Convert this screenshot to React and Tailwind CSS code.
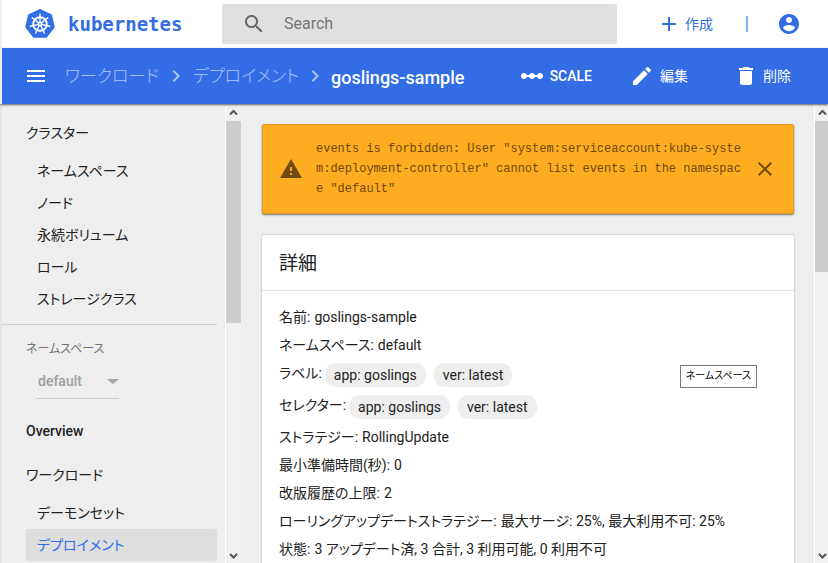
import React from "react";

const JP = "font-[Roboto,'Noto_Sans_CJK_JP',sans-serif] [font-feature-settings:'palt']";

const clusterItems = ["ネームスペース", "ノード", "永続ボリューム", "ロール", "ストレージクラス"];

function KubeLogo() {
  const spokes = [0, 1, 2, 3, 4, 5, 6].map((i) => (i * 360) / 7);
  return (
    <svg viewBox="0 0 32 32" className="size-8 shrink-0" aria-hidden="true">
      <path
        d="M16 2.5 L26.6 7.5 L29.2 18.9 L21.8 28.2 L10.2 28.2 L2.8 18.9 L5.4 7.5 Z"
        fill="#326de6"
        stroke="#326de6"
        strokeWidth="3"
        strokeLinejoin="round"
      />
      <g stroke="#fff" fill="none">
        <circle cx="16" cy="16" r="6.8" strokeWidth="1.9" />
        {spokes.map((a) => (
          <path key={a} d="M16 14.5V6" strokeWidth="1.4" strokeLinecap="round" transform={`rotate(${a} 16 16)`} />
        ))}
      </g>
      <circle cx="16" cy="16" r="2.4" fill="#fff" />
      <circle cx="16" cy="16" r="0.8" fill="#326de6" />
    </svg>
  );
}

function Icon({ d, className }) {
  return (
    <svg viewBox="0 0 24 24" fill="currentColor" className={`shrink-0 ${className}`} aria-hidden="true">
      <path d={d} />
    </svg>
  );
}

const icons = {
  search:
    "M15.5 14h-.79l-.28-.27C15.41 12.59 16 11.11 16 9.5 16 5.91 13.09 3 9.5 3S3 5.91 3 9.5 5.91 16 9.5 16c1.61 0 3.09-.59 4.23-1.57l.27.28v.79l5 4.99L20.49 19l-4.99-5zm-6 0C7.01 14 5 11.99 5 9.5S7.01 5 9.5 5 14 7.01 14 9.5 11.99 14 9.5 14z",
  add: "M19 13h-6v6h-2v-6H5v-2h6V5h2v6h6v2z",
  account:
    "M12 2C6.48 2 2 6.48 2 12s4.48 10 10 10 10-4.48 10-10S17.52 2 12 2zm0 3c1.66 0 3 1.34 3 3s-1.34 3-3 3-3-1.34-3-3 1.34-3 3-3zm0 14.2c-2.5 0-4.71-1.28-6-3.22.03-1.99 4-3.08 6-3.08 1.99 0 5.97 1.09 6 3.08-1.29 1.94-3.5 3.22-6 3.22z",
  menu: "M3 18h18v-2H3v2zm0-5h18v-2H3v2zm0-7v2h18V6H3z",
  chevron: "M10 6L8.59 7.41 13.17 12l-4.58 4.59L10 18l6-6z",
  scale:
    "M23 12c0 1.66-1.34 3-3 3-1.3 0-2.4-.84-2.82-2h-2.36c-.42 1.16-1.52 2-2.82 2s-2.4-.84-2.82-2H6.82C6.4 14.16 5.3 15 4 15c-1.66 0-3-1.34-3-3s1.34-3 3-3c1.3 0 2.4.84 2.82 2h2.36C9.6 9.84 10.7 9 12 9s2.4.84 2.82 2h2.36C17.6 9.84 18.7 9 20 9c1.66 0 3 1.34 3 3z",
  edit: "M3 17.25V21h3.75L17.81 9.94l-3.75-3.75L3 17.25zM20.71 7.04c.39-.39.39-1.02 0-1.41l-2.34-2.34c-.39-.39-1.02-.39-1.41 0l-1.83 1.83 3.75 3.75 1.83-1.83z",
  trash: "M6 19c0 1.1.9 2 2 2h8c1.1 0 2-.9 2-2V7H6v12zM19 4h-3.5l-1-1h-5l-1 1H5v2h14V4z",
  warning: "M1 21h22L12 2 1 21zm12-3h-2v-2h2v2zm0-4h-2v-4h2v4z",
  close:
    "M19 6.41L17.59 5 12 10.59 6.41 5 5 6.41 10.59 12 5 17.59 6.41 19 12 13.41 17.59 19 19 17.59 13.41 12z",
};

function Scrollbar({ size, thumb }) {
  return (
    <div className={`flex shrink-0 flex-col overflow-hidden border-l border-white bg-[#f0f0f0] ${size}`} aria-hidden="true">
      <svg viewBox="0 0 15 17" className="h-[17px] w-[15px] shrink-0">
        <path d="M4 10.5L7.5 7l3.500 3.500" fill="none" stroke="#555" strokeWidth="2" />
      </svg>
      <div className={`w-full shrink-0 bg-[#cdcdcd] ${thumb}`} />
      <div className="flex-1" />
      <svg viewBox="0 0 15 16" className="h-4 w-[15px] shrink-0">
        <path d="M4 7L7.500 10.500 11 7" fill="none" stroke="#555" strokeWidth="2" />
      </svg>
    </div>
  );
}

function Chip({ children }) {
  return <span className="mr-2 h-6 rounded-[10px] bg-[#eee] px-[9px] leading-6">{children}</span>;
}

function Row({ label, children }) {
  return (
    <div className="flex h-7 items-center gap-1 whitespace-nowrap">
      <dt>{label}:</dt>
      <dd>{children}</dd>
    </div>
  );
}

function ChipRow({ label, children }) {
  return (
    <div className="flex h-8 gap-[3px] whitespace-nowrap">
      <dt className="leading-7">{label}:</dt>
      <dd className="flex items-center">{children}</dd>
    </div>
  );
}

function Sidebar() {
  const item = "flex h-8 items-center rounded-xs pl-[11px]";
  return (
    <nav className="min-w-0 flex-1 overflow-hidden border-l-2 border-[#e4e4e4] pt-[13px]">
      <a href="#cluster" className="ml-6 flex h-8 items-center">クラスター</a>
      <ul className="mt-[6px] mr-2 ml-6">
        {clusterItems.map((name) => (
          <li key={name}>
            <a href="#item" className={item}>{name}</a>
          </li>
        ))}
      </ul>
      <div className="mt-[9px] mr-2 border-t border-[#cfcfcf] pt-[14px]">
        <label htmlFor="namespace" className="ml-6 block text-xs leading-5 text-[#757575]">ネームスペース</label>
        <div className="mt-2 ml-[34px] flex h-8 w-[83px] items-center border-b border-[#cfcfcf] pb-[3px]">
          <select id="namespace" className="min-w-0 flex-1 appearance-none bg-transparent pl-[2px] font-medium text-[#9e9e9e]">
            <option>default</option>
          </select>
          <span className="size-0 border-x-[6px] border-t-[5px] border-x-transparent border-t-[#a6a6a6]" />
        </div>
      </div>
      <a href="#overview" className="mt-4 ml-6 flex h-8 items-center font-medium">Overview</a>
      <a href="#workloads" className="mt-3 ml-6 flex h-8 items-center">ワークロード</a>
      <ul className="mt-[6px] mr-2 ml-6">
        <li><a href="#daemonsets" className={item}>デーモンセット</a></li>
        <li><a href="#deployments" className={`${item} bg-[#dedede] text-[#326de6]`}>デプロイメント</a></li>
      </ul>
    </nav>
  );
}

export default function App() {
  return (
    <div className={`${JP} flex h-screen flex-col overflow-hidden bg-[#eee] text-sm text-[#212121]`}>
      <header className="flex h-12 shrink-0 items-center border-l-2 border-[#eee] bg-white text-[#326de6]">
        <a href="#home" className="flex w-[220px] shrink-0 items-center gap-3 pl-[22px]">
          <KubeLogo />
          <span className="font-['DejaVu_Sans_Mono',monospace] text-[19px] leading-6 font-bold">kubernetes</span>
        </a>
        <label className="flex h-10 min-w-0 flex-1 items-center gap-[18px] rounded-xs bg-[#e0e0e0] pl-5 text-[#666]">
          <Icon d={icons.search} className="size-6" />
          <input type="text" placeholder="Search" aria-label="Search" className="min-w-0 flex-1 bg-transparent text-base outline-none placeholder:text-[#757575]" />
        </label>
        <button className="ml-10 flex items-center gap-1"><Icon d={icons.add} className="size-6" />作成</button>
        <span className="ml-[33px] h-4 w-[2px] bg-[#84b0f2]" />
        <button aria-label="Account" className="mr-[27px] ml-[29px]"><Icon d={icons.account} className="size-6" /></button>
      </header>

      <div className="relative flex h-14 shrink-0 items-center border-l-2 border-[#eee] bg-[#326de6] pr-[37px] text-white shadow-[0_1px_2px_rgba(0,0,0,0.6)]">
        <button aria-label="Menu" className="ml-[22px]"><Icon d={icons.menu} className="size-6" /></button>
        <nav className="ml-[17px] flex min-w-0 flex-1 items-center text-[17px] font-light whitespace-nowrap text-white/60">
          <a href="#workloads" className="w-[94px]">ワークロード</a>
          <Icon d={icons.chevron} className="mx-[5px] size-6" />
          <a href="#deployments" className="w-[106px]">デプロイメント</a>
          <Icon d={icons.chevron} className="mx-1 size-6" />
          <span className="pt-1 text-lg font-medium text-white">goslings-sample</span>
        </nav>
        <button className="flex items-center gap-[6px] font-medium"><Icon d={icons.scale} className="size-6" />SCALE</button>
        <button className="ml-[38px] flex items-center gap-[6px]"><Icon d={icons.edit} className="size-6" />編集</button>
        <button className="ml-[46px] flex items-center gap-[5px]"><Icon d={icons.trash} className="size-6" />削除</button>
      </div>

      <div className="flex min-h-0 flex-1">
        <aside className="flex w-[241px] shrink-0">
          <Sidebar />
          <Scrollbar size="w-4" thumb="h-[202px]" />
        </aside>

        <main className="min-w-0 flex-1 overflow-hidden pt-5 pr-5 pl-[21px]">
          <div role="alert" className="flex items-center rounded-xs border border-[#e2981f] bg-[#ffad20] px-4 py-[14px] text-[#6e4a0e] shadow-[0_1px_2px_rgba(0,0,0,0.5)]">
            <Icon d={icons.warning} className="size-6" />
            <p className="ml-[13px] min-w-0 flex-1 font-['Liberation_Mono',monospace] text-xs leading-5 break-all">
              events is forbidden: User "system:serviceaccount:kube-system:deployment-controller" cannot list events in the namespace "default"
            </p>
            <button aria-label="Close" className="ml-2"><Icon d={icons.close} className="size-6" /></button>
          </div>

          <section className="relative mt-[21px] h-96 rounded-xs bg-white shadow-[0_0_2px_rgba(0,0,0,0.35)]">
            <h2 className="flex h-14 items-center border-b border-[#e0e0e0] px-[17px] pt-[2px] text-[19px]">詳細</h2>
            <dl className="px-[17px] pt-3">
              <Row label="名前">goslings-sample</Row>
              <Row label="ネームスペース">default</Row>
              <ChipRow label="ラベル"><Chip>app: goslings</Chip><Chip>ver: latest</Chip></ChipRow>
              <ChipRow label="セレクター"><Chip>app: goslings</Chip><Chip>ver: latest</Chip></ChipRow>
              <Row label="ストラテジー">RollingUpdate</Row>
              <Row label="最小準備時間(秒)">0</Row>
              <Row label="改版履歴の上限">2</Row>
              <Row label="ローリングアップデートストラテジー">最大サージ: 25%, 最大利用不可: 25%</Row>
              <Row label="状態">3 アップデート済, 3 合計, 3 利用可能, 0 利用不可</Row>
            </dl>
            <div role="tooltip" className="absolute top-[130px] right-[37px] flex h-[23px] items-center border border-[#767676] bg-white px-[5px] text-[10px] whitespace-nowrap text-black">
              ネームスペース
            </div>
          </section>
        </main>
        <Scrollbar size="w-[14px]" thumb="h-[151px]" />
      </div>
    </div>
  );
}
